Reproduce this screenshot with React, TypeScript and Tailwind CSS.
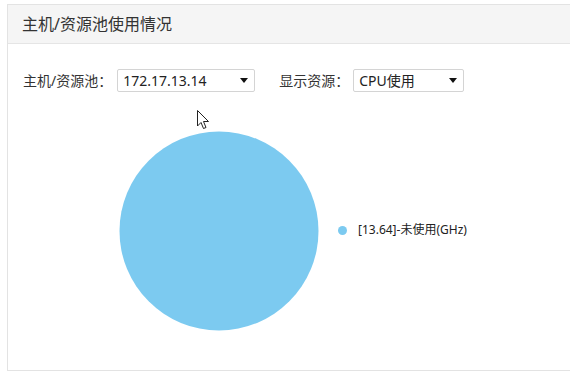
import React from "react";

function Select({ value, width }: { value: string; width: string }) {
  return (
    <div
      className={`${width} h-[23px] border border-[#d4d4d4] rounded-[2px] bg-white flex items-center justify-between pl-[5px] pr-[6px] text-[14px] text-[#222]`}
    >
      <span className="leading-none">{value}</span>
      <svg width="8" height="5" viewBox="0 0 8 5">
        <path d="M0 0 L8 0 L4 5 Z" fill="#111" />
      </svg>
    </div>
  );
}

export default function App() {
  return (
    <div
      className="relative w-[570px] h-[372px] bg-white overflow-hidden pt-[4px] pl-[7px]"
      style={{ fontFamily: '"Noto Sans", "Noto Sans CJK SC", sans-serif' }}
    >
      <div className="w-[600px] h-[367px] border-l border-t border-b border-[#e3e3e3] flex flex-col">
        <div className="h-[39px] bg-[#f5f5f5] border-b border-[#e5e5e5] flex items-center pl-[14px] text-[16px] text-[#333]">
          主机/资源池使用情况
        </div>
        <div className="flex-1 flex flex-col pl-[15px]">
          <div className="mt-[25px] flex items-center text-[14px] text-[#333]">
            <span>主机/资源池：</span>
            <div className="ml-[5px]">
              <Select value="172.17.13.14" width="w-[138px]" />
            </div>
            <span className="ml-[24px]">显示资源：</span>
            <div className="ml-[4px]">
              <Select value="CPU使用" width="w-[111px]" />
            </div>
          </div>
          <div className="mt-[39px] flex items-center">
            <svg width="200" height="200" viewBox="0 0 200 200" className="ml-[96px]">
              <circle cx="100" cy="100" r="99.5" fill="#7ccaf0" />
            </svg>
            <div className="ml-[19px] flex items-center mt-[-2px]">
              <span className="w-[9px] h-[9px] rounded-full bg-[#7ccaf0]" />
              <span className="ml-[11px] text-[12px] text-[#222]">[13.64]-未使用(GHz)</span>
            </div>
          </div>
        </div>
      </div>
      <svg
        className="absolute left-[197px] top-[110px]"
        width="13"
        height="20"
        viewBox="0 0 13 20"
      >
        <path
          d="M0.5 0.5 L0.5 16 L4 12.5 L6.5 18.5 L9 17.5 L6.5 11.5 L11.5 11.5 Z"
          fill="#fff"
          stroke="#222"
          strokeWidth="1"
          strokeLinejoin="miter"
        />
      </svg>
    </div>
  );
}
